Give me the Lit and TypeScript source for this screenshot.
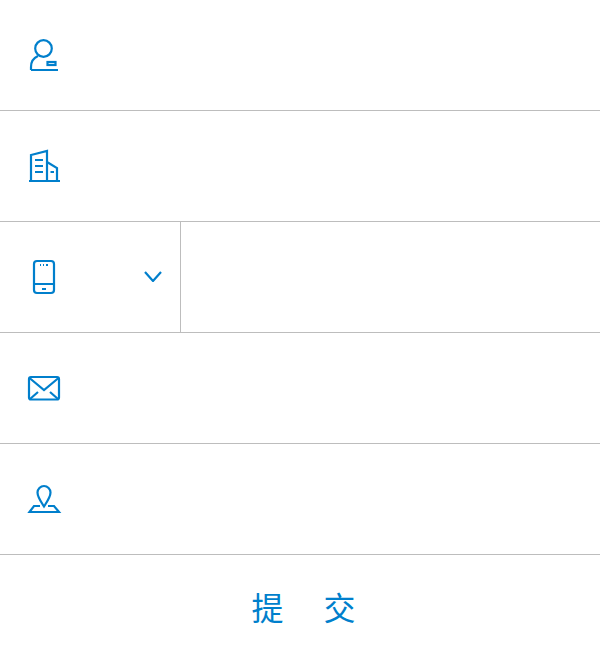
import { LitElement, html, css } from "lit";
import { customElement } from "lit/decorators.js";

@customElement("app-root")
export class AppRoot extends LitElement {
  static styles = css`
    :host { display: block; width: 600px; height: 660px; background: #fff; overflow: hidden; }
    .row { display: flex; align-items: center; height: 110px; border-bottom: 1px solid #bdbdbd; }
    .lead { display: flex; align-items: center; justify-content: space-between; width: 181px; height: 100%; box-sizing: border-box; border-right: 1px solid #bdbdbd; padding-right: 18px; }
    .icon { display: block; width: 40px; height: 40px; margin-left: 24px; fill: none; stroke: #007fcc; stroke-width: 2.2; }
    .chev { display: block; width: 18px; height: 11px; margin-bottom: 1px; fill: none; stroke: #007fcc; stroke-width: 2.2; }
    .submit { display: flex; justify-content: center; align-items: center; gap: 40px; height: 101px; padding-bottom: 4px; padding-left: 7px; color: #007fcc; font: 400 32px "Noto Sans CJK SC", "Liberation Sans", sans-serif; }
  `;

  render() {
    return html`
      <div class="row">
        <svg class="icon" viewBox="0 0 40 40">
          <circle cx="19.5" cy="13.5" r="8.3"></circle>
          <path d="M7 35V32Q7 24 14 21M7 35H34"></path>
          <rect x="23.5" y="27" width="8" height="3"></rect>
        </svg>
      </div>
      <div class="row">
        <svg class="icon" viewBox="0 0 40 40">
          <path d="M7 35V9L23 5V35M5 35H36M23 16L33 22V35M11 14H19M11 20H19M11 26H19M26.5 26H30"></path>
        </svg>
      </div>
      <div class="row">
        <div class="lead">
          <svg class="icon" viewBox="0 0 40 40">
            <rect x="10" y="4" width="20" height="32" rx="3"></rect>
            <path d="M10 27H30M18 32H22"></path>
            <path d="M16 8H17M19 8H20M22 8H24"></path>
          </svg>
          <svg class="chev" viewBox="0 0 18 11">
            <path d="M1 1L9 10L17 1"></path>
          </svg>
        </div>
      </div>
      <div class="row">
        <svg class="icon" viewBox="0 0 40 40">
          <rect x="5" y="9" width="30" height="22.5" rx="2"></rect>
          <path d="M5.5 10L20 22L34.5 10M6 31L14 24M26 24L34 31"></path>
        </svg>
      </div>
      <div class="row">
        <svg class="icon" viewBox="0 0 40 40">
          <path d="M20 27.5C16.5 22 13.5 18 13.5 13.5A6.5 6.5 0 0 1 26.5 13.5C26.5 18 23.5 22 20 27.5Z"></path>
          <path d="M16 27H10L5.5 33H35L30 27H24"></path>
        </svg>
      </div>
      <div class="submit"><span>提</span><span>交</span></div>
    `;
  }
}
